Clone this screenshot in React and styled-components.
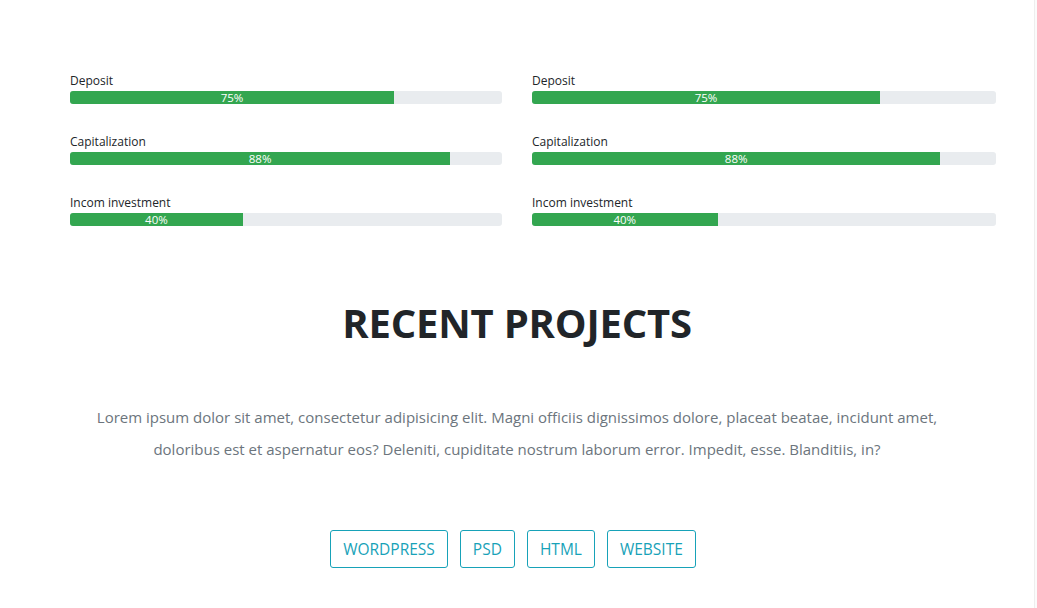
import React from "react";
import styled, { createGlobalStyle } from "styled-components";

const Global = createGlobalStyle`
  html, body { margin: 0; padding: 0; background: #fff; }
  body { font-family: "Open Sans", "Noto Sans", sans-serif; color: #212529; }
`;

const Page = styled.div`
  display: flex;
  width: 1037px;
  height: 608px;
  overflow: hidden;
`;

const Main = styled.main`
  flex: 1;
  padding-top: 72px;
`;

const Edge = styled.div`
  width: 2px;
  background: #fbfbfb;
  border-left: 1px solid #eeeeee;
`;

const Skills = styled.div`
  display: grid;
  grid-template-columns: 432px 464px;
  column-gap: 30px;
  padding-left: 70px;
`;

const Column = styled.div`
  display: flex;
  flex-direction: column;
  gap: 29px;
`;

const Skill = styled.div`
  display: flex;
  flex-direction: column;
`;

const Label = styled.div`
  font-size: 12px;
  line-height: 18px;
  color: #212529;
  margin-bottom: 1px;
`;

const Track = styled.div`
  height: 13px;
  border-radius: 3px;
  background: #e9ecef;
  overflow: hidden;
  display: flex;
`;

const Fill = styled.div`
  background: #33a650;
  color: #fff;
  font-size: 11.5px;
  line-height: 13px;
  text-align: center;
  white-space: nowrap;
`;

const Section = styled.section`
  display: flex;
  flex-direction: column;
  align-items: center;
  padding-top: 73px;
`;

const Title = styled.h2`
  margin: 0;
  font-size: 40px;
  line-height: 48px;
  font-weight: 700;
  color: #212529;
  letter-spacing: -0.2px;
`;

const Text = styled.p`
  margin: 54px 0 0;
  width: 860px;
  text-align: center;
  font-size: 15px;
  line-height: 32px;
  color: #6c757d;
`;

const Filters = styled.div`
  display: flex;
  gap: 12px;
  margin-top: 65px;
  padding-right: 8px;
`;

const FilterButton = styled.button`
  font-family: "Open Sans", "Noto Sans", sans-serif;
  font-size: 15.5px;
  line-height: 24px;
  padding: 6px 12px;
  border: 1px solid #17a2b8;
  border-radius: 3px;
  background: transparent;
  color: #17a2b8;
  text-transform: uppercase;
  cursor: pointer;
`;

const skills = [
  { label: "Deposit", value: 75 },
  { label: "Capitalization", value: 88 },
  { label: "Incom investment", value: 40 },
];

function SkillColumn() {
  return (
    <Column>
      {skills.map((s) => (
        <Skill key={s.label}>
          <Label>{s.label}</Label>
          <Track>
            <Fill style={{ width: `${s.value}%` }}>{s.value}%</Fill>
          </Track>
        </Skill>
      ))}
    </Column>
  );
}

export default function App() {
  return (
    <>
      <Global />
      <Page>
        <Main>
          <Skills>
            <SkillColumn />
            <SkillColumn />
          </Skills>
          <Section>
            <Title>RECENT PROJECTS</Title>
            <Text>
              Lorem ipsum dolor sit amet, consectetur adipisicing elit. Magni officiis dignissimos dolore, placeat beatae, incidunt amet, doloribus est et aspernatur eos? Deleniti, cupiditate nostrum laborum error. Impedit, esse. Blanditiis, in?
            </Text>
            <Filters>
              {["WordPress", "PSD", "HTML", "Website"].map((f) => (
                <FilterButton key={f}>{f}</FilterButton>
              ))}
            </Filters>
          </Section>
        </Main>
        <Edge />
      </Page>
    </>
  );
}
